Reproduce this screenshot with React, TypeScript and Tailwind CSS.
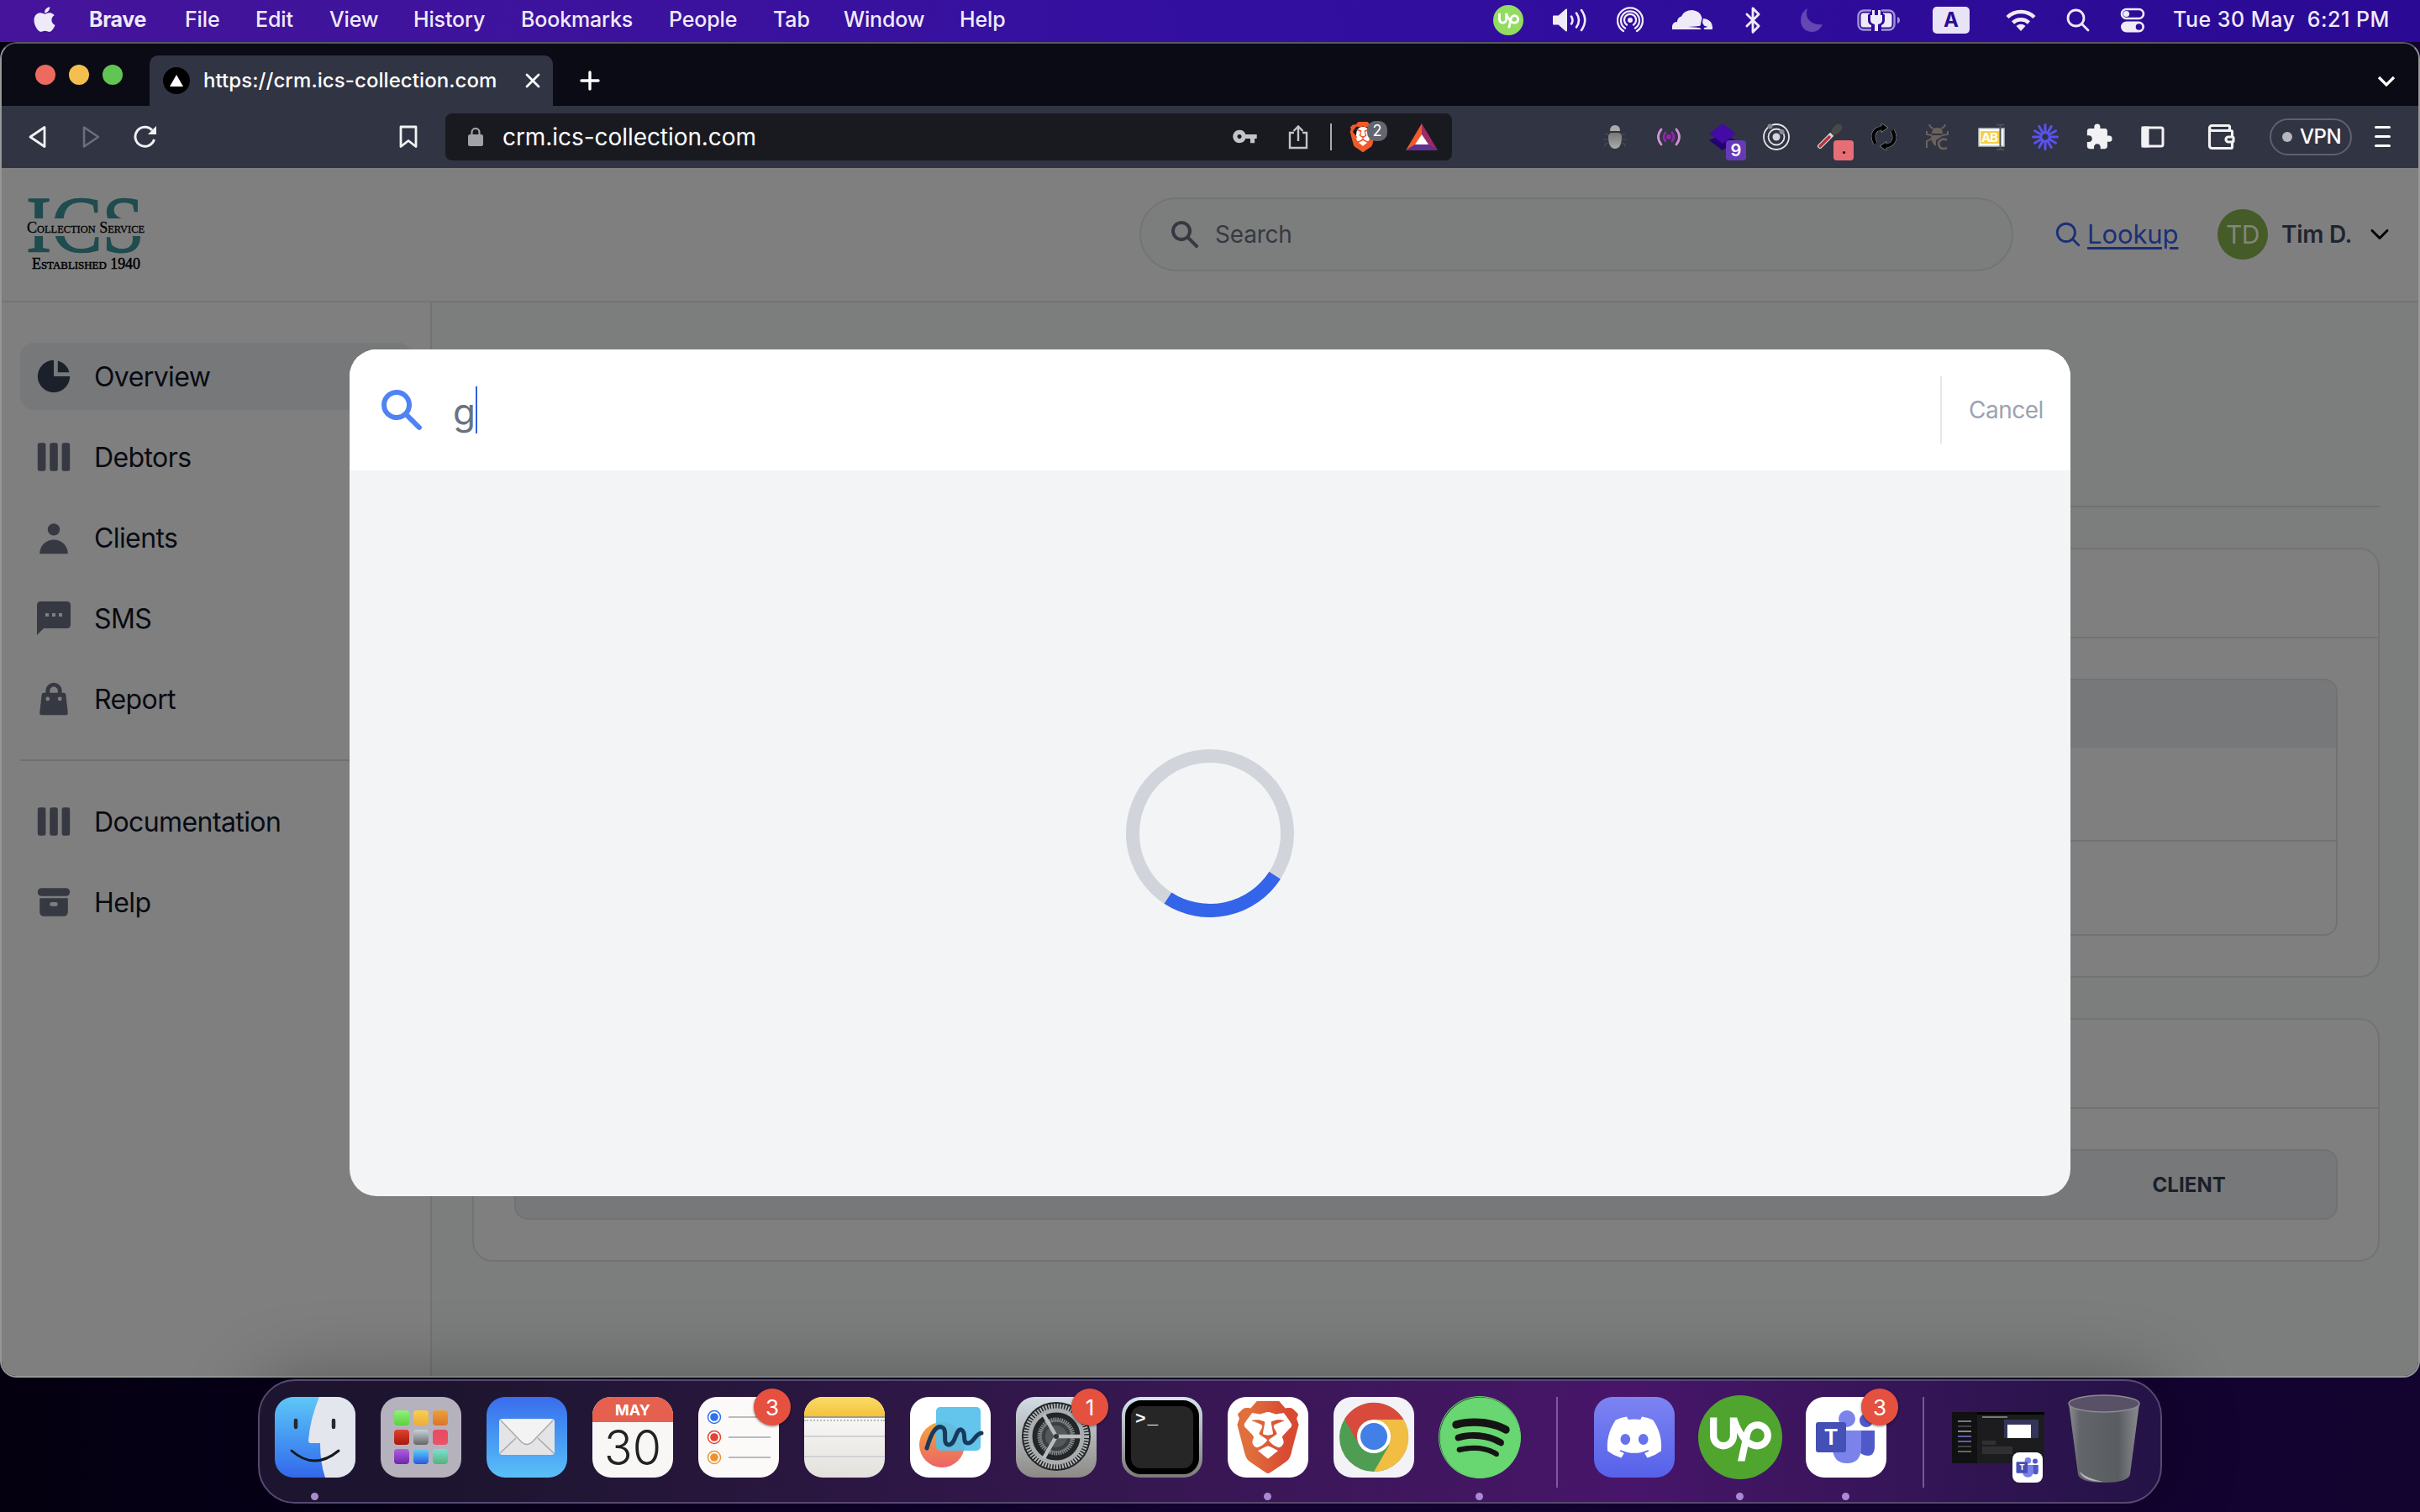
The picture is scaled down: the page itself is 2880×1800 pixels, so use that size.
import React from "react";
import { Bluetooth, ChevronDown, X, Wallet } from "lucide-react";
import { FaApple, FaDiscord, FaSpotify } from "react-icons/fa";
import { SiBrave, SiUpwork } from "react-icons/si";
import { HiArchive, HiChartPie, HiSearch, HiShoppingBag, HiUser, HiViewBoards } from "react-icons/hi";
import { HiOutlineMagnifyingGlass } from "react-icons/hi2";
import { MdExtension, MdSms, MdVpnKey } from "react-icons/md";

const menuItems = [
  { label: "Brave", cls: "w-[114px] font-bold tracking-[-0.4px]" },
  { label: "File", cls: "w-[84px]" },
  { label: "Edit", cls: "w-[88px]" },
  { label: "View", cls: "w-[100px]" },
  { label: "History", cls: "w-[128px]" },
  { label: "Bookmarks", cls: "w-[176px]" },
  { label: "People", cls: "w-[124px]" },
  { label: "Tab", cls: "w-[84px]" },
  { label: "Window", cls: "w-[138px]" },
  { label: "Help", cls: "w-[80px]" },
];

function MenuBar() {
  return (
    <header className="flex h-[50px] shrink-0 items-center bg-linear-to-r from-[#45149a] via-[#330fa0] to-[#2a0a94] text-[25px] font-medium tracking-[-0.15px] text-[#efeaf8]">
      <div className="flex h-full w-[106px] items-center pl-[39px] pb-[4px]">
        <FaApple size={34} className="w-[28px]" />
      </div>
      {menuItems.map((m) => (
        <span key={m.label} className={`shrink-0 whitespace-nowrap pb-[2px] ${m.cls}`}>{m.label}</span>
      ))}
      <div className="ml-auto flex h-full items-center pb-[2px]">
        <span className="mr-[35px] flex size-[36px] items-center justify-center rounded-full bg-[#93dc62] text-white">
          <SiUpwork size={25} />
        </span>
        <svg width="42" height="30" viewBox="0 0 42 30" className="mr-[34px]" fill="none" stroke="currentColor" strokeWidth="2.6" strokeLinecap="round">
          <path d="M1 10.5h6L16 2.5v25L7 19.5H1z" fill="currentColor" strokeWidth="2" strokeLinejoin="round" />
          <path d="M22 10.5q3 4.5 0 9M28 6.500q6 8.500 0 17M34 3q8.500 12 0 24" />
        </svg>
        <svg width="32" height="32" viewBox="0 0 32 32" className="mr-[33px]" fill="none" stroke="currentColor" strokeWidth="2.300" strokeLinecap="round">
          <circle cx="16" cy="16" r="3" fill="currentColor" stroke="none" />
          <path d="M12 21.500a7 7 0 1 1 8 0M10 25.500a11 11 0 1 1 12 0M8 29a15 15 0 1 1 16 0" />
        </svg>
        <svg width="50" height="28" viewBox="0 0 50 28" className="mr-[27px]" fill="currentColor">
          <path d="M1 25v-4q1-5 6-5 0-5 5-6.500Q15 2 25 2q9 1 11 8 1 3 0 6l-1.500 4.500-4.500 1.500 4.500 1.500L35.500 25zM38 12q10 1 11 10v3H39.500l-1-2 4.500-1-4-1.500-2-3.500z" />
          <path d="M36 12l1.500 9 5.500 1-5.500 1-.5 3-1-3-16-1 15-1z" fill="#2d0b9b" />
        </svg>
        <Bluetooth size={34} className="mr-[40px] w-[40px]" strokeWidth={2} />
        <svg width="30" height="30" viewBox="0 0 30 30" className="mr-[37px] -ml-[4px]" fill="#6447b4">
          <path d="M9 1q-3 8 2 14t16 5q-4 9-13 9Q2 28 1 16 1 5 9 1z" />
        </svg>
        <svg width="54" height="28" viewBox="0 0 54 28" className="mr-[37px]" fill="none">
          <path d="M18 2.500H9a6.500 6.500 0 0 0-6.500 6.500v10a6.500 6.500 0 0 0 6.500 6.500h9M30 2.500h9A6.500 6.500 0 0 1 45.500 9v10a6.500 6.500 0 0 1-6.500 6.500h-9" stroke="#a293d4" strokeWidth="2.400" />
          <path d="M49 10v8q3-1 3-4t-3-4z" fill="#a293d4" />
          <path d="M16 5.500H8.500Q5.500 5.500 5.500 9v10q0 3.500 3 3.500H18v-2.500q-4-1.500-4-6V7.500l2-1zM32 5.500h7q3.500 0 3.500 3.500v10q0 3.500-3.500 3.500h-9v-2.500q4-1.500 4-6V7.500l-2-1zM17 8h14v6q0 4-5 5v8h-4v-8q-5-1-5-5zM19 2h3v6h-3zM26 2h3v6h-3z" fill="currentColor" />
        </svg>
        <span className="mr-[43px] flex h-[32px] w-[44px] items-center justify-center rounded-[5px] bg-[#e9e4f5] text-[24px] font-bold text-[#2c0b98]">A</span>
        <svg width="36" height="27" viewBox="0 0 36 27" className="mr-[36px]" fill="none" stroke="currentColor" strokeWidth="4.500">
          <path d="M2 9.500a23 23 0 0 1 32 0M8.500 16a14 14 0 0 1 19 0" />
          <path d="M18 26l-5.500-6a8 8 0 0 1 11 0z" fill="currentColor" stroke="none" />
        </svg>
        <svg width="28" height="28" viewBox="0 0 28 28" className="mr-[36px]" fill="none" stroke="currentColor" strokeWidth="2.800" strokeLinecap="round">
          <circle cx="11.500" cy="11.500" r="9.500" /><path d="M18.500 18.500l7.500 7.500" />
        </svg>
        <svg width="30" height="30" viewBox="0 0 30 30" className="mr-[33px]" fill="none">
          <rect x="2" y="2" width="26" height="11" rx="5.500" stroke="currentColor" strokeWidth="2.600" /><circle cx="7.500" cy="7.500" r="3.600" fill="currentColor" />
          <rect x="1" y="16.500" width="28" height="13" rx="6.500" fill="currentColor" /><circle cx="22.500" cy="23" r="3.800" fill="#2c0b98" />
        </svg>
        <span className="mr-[36px] w-[258px] shrink-0 whitespace-pre tracking-[0.5px]">{"Tue 30 May  6:21 PM"}</span>
      </div>
    </header>
  );
}

function TabStrip() {
  return (
    <div className="flex h-[74px] shrink-0 items-start bg-[#0a0b14]">
      <div className="flex w-[176px] gap-4 pl-[40px] pt-[25px]">
        <i className="size-[24px] rounded-full bg-[#ed6a5e]" />
        <i className="size-[24px] rounded-full bg-[#f4bf4f]" />
        <i className="size-[24px] rounded-full bg-[#61c554]" />
      </div>
      <div className="mt-[14px] flex h-[60px] w-[480px] items-center rounded-t-[10px] bg-[#313442] pl-[16px]">
        <span className="mr-[16px] flex size-[32px] items-center justify-center rounded-full bg-black">
          <svg width="16" height="14" viewBox="0 0 16 14"><path d="M8 0l8 14H0z" fill="#fff" /></svg>
        </span>
        <span className="w-[378px] whitespace-nowrap text-[24px] font-medium tracking-[0.07px] text-white">https://crm.ics-collection.com</span>
        <X size={28} strokeWidth={2.400} className="text-white" />
      </div>
      <svg width="24" height="24" viewBox="0 0 24 24" className="ml-[32px] mt-[32px]" stroke="#fff" strokeWidth="3.400" strokeLinecap="round"><path d="M2 12h20M12 2v20" /></svg>
      <svg width="22" height="14" viewBox="0 0 22 14" className="ml-auto mr-[27px] mt-[38px]" fill="none" stroke="#fff" strokeWidth="3.200"><path d="M2 2l9 9 9-9" /></svg>
    </div>
  );
}

function BraveMark({ size }: { size: number }) {
  return (
    <span className="relative flex items-center justify-center">
      <i className="absolute top-[18%] h-[66%] w-[56%] rounded-[40%] bg-white" />
      <SiBrave size={size} className="relative text-[#f0592a]" />
    </span>
  );
}

function Slot({ children, last }: { children: React.ReactNode; last?: boolean }) {
  return <div className={last ? "relative flex h-[34px] w-[80px] items-center justify-center" : "relative flex h-[34px] w-[64px] items-center justify-center"}>{children}</div>;
}

function Extensions() {
  const rays = Array.from({ length: 12 }, (_, i) => i * 30);
  return (
    <div className="flex items-center">
      <Slot>
        <svg width="28" height="28" viewBox="0 0 28 28">
          <defs><linearGradient id="bug" x1="0" y1="0" x2="0" y2="1"><stop offset="0" stopColor="#777" /><stop offset="1" stopColor="#aaa" /></linearGradient></defs>
          <path d="M8 7q0-7 6-7t6 7z" fill="#a9a9a9" />
          <path d="M6 12l-4-2M6 17H0M6 21l-4 2v3M22 12l4-2M22 17h6M22 21l4 2v3" stroke="#4c4e55" strokeWidth="1.200" fill="none" />
          <path d="M6 13q1-4 4-4h8q3 0 4 4 0 15-8 15T6 13z" fill="url(#bug)" />
        </svg>
      </Slot>
      <Slot>
        <svg width="28" height="22" viewBox="0 0 28 22" fill="none" strokeWidth="2.800" strokeLinecap="round">
          <circle cx="14" cy="11" r="3" fill="#9027ae" /><path d="M10 6q-4 5 0 10M18 6q4 5 0 10" stroke="#8c2aaa" />
          <path d="M5 2q-7 9 0 18M23 2q7 9 0 18" stroke="#cf93dc" />
        </svg>
      </Slot>
      <Slot>
        <svg width="32" height="32" viewBox="0 0 32 32"><path d="M0 20l16-7 16 7-16 12z" fill="#22046e" /><path d="M16 0l16 12-16 12L0 12z" fill="#430aa6" /></svg>
        <span className="absolute left-[36px] top-[21px] flex size-[24px] items-center justify-center rounded-[4px] bg-[#643ab7] text-[20px] font-semibold leading-none text-white">9</span>
      </Slot>
      <Slot>
        <svg width="32" height="32" viewBox="0 0 32 32" fill="none" stroke="#e2e4e8" strokeWidth="1.800">
          <circle cx="16" cy="16" r="15" /><circle cx="16" cy="16" r="9.500" /><circle cx="16" cy="16" r="4.500" fill="#d5d7da" stroke="none" />
          <circle cx="8.500" cy="3.500" r="3" fill="#898b90" stroke="none" /><circle cx="22.500" cy="10" r="3" fill="#898b90" stroke="none" />
        </svg>
      </Slot>
      <Slot>
        <svg width="32" height="32" viewBox="0 0 32 32" strokeLinecap="round" fill="none">
          <path d="M4 27L19 12" stroke="#d4d4d4" strokeWidth="6" /><path d="M4 27L15 16" stroke="#b8323d" strokeWidth="3.500" />
          <path d="M17 8l7 7" stroke="#333" strokeWidth="5" /><path d="M22 9l4-4" stroke="#484848" strokeWidth="9" />
        </svg>
        <span className="absolute left-[36px] top-[21px] flex size-[24px] items-center justify-center rounded-[4px] bg-[#e76d76]"><i className="mt-[6px] size-[3px] rounded-full bg-black" /></span>
      </Slot>
      <Slot>
        <svg width="30" height="32" viewBox="0 0 30 32" fill="none">
          <g stroke="#8e9097" strokeWidth="5"><path d="M5 24Q-1 13 7 7l6-2M25 8q6 11-2 17l-6 2" /></g>
          <path d="M12 -.5l8 5.500-8 5.500zM18 32.500l-8-5.500 8-5.500z" fill="#000" stroke="#8e9097" strokeWidth=".8" />
          <g stroke="#000" strokeWidth="4"><path d="M5 24Q-1 13 7 7l6-2M25 8q6 11-2 17l-6 2" /></g>
        </svg>
      </Slot>
      <Slot>
        <svg width="30" height="32" viewBox="0 0 30 32" fill="none" stroke="#6b6259" strokeWidth="2">
          <path d="M5 1q1 4 5 5M24 1q-1 4-5 5M8 14L2 13V9M20 14l7-1V9M8 18l-6 3v8" /><path d="M8 12q0-7 6.500-7t6.500 7zM7 14h15l-9 6v7q-6-3-6-13z" fill="#6b6259" stroke="none" />
          <path d="M26 20q-3-2-6-1-4 2-4 5 1 6 6 6 2 0 4-1" strokeWidth="2.600" />
        </svg>
      </Slot>
      <Slot>
        <svg width="32" height="32" viewBox="0 0 32 32">
          <rect x="1" y="6" width="30" height="21" fill="#fff" stroke="#b9c4c2" strokeWidth="1.500" /><rect x="3" y="9" width="24" height="15" fill="#f7cf46" />
          <text x="4" y="22" fontSize="15" fontWeight="700" fontFamily="Inter, sans-serif" fill="#fff" textLength="20">AB</text>
          <path d="M22 1.500h9M22 31h9M26.500 1.500V31" stroke="#4c5150" strokeWidth="2" />
        </svg>
      </Slot>
      <Slot>
        <svg width="32" height="32" viewBox="0 0 32 32" stroke="#5a52f0" strokeWidth="3" strokeLinecap="round">
          {rays.map((r) => <path key={r} d="M16 1.500V11" transform={`rotate(${r} 16 16)`} />)}
          <circle cx="16" cy="16" r="5.500" fill="none" strokeWidth="2.500" />
        </svg>
      </Slot>
      <Slot><MdExtension size={34} className="text-[#f2f2f4]" /></Slot>
      <Slot><svg width="28" height="26" viewBox="0 0 28 26" fill="none" stroke="#f2f2f4" strokeWidth="3"><rect x="2" y="2" width="24" height="22" rx="2" /><path d="M2 2h6v22H2z" fill="#f2f2f4" /></svg></Slot>
      <Slot last><Wallet size={36} strokeWidth={2.100} className="ml-[17px] text-[#f2f2f4]" /></Slot>
    </div>
  );
}

function Toolbar() {
  return (
    <div className="flex h-[74px] shrink-0 items-center bg-[#313442] pb-px">
      <svg width="24" height="28" viewBox="0 0 24 28" className="ml-[31px] mr-[41px]" fill="none" stroke="#f2f2f4" strokeWidth="2.800" strokeLinejoin="round"><path d="M20 2.500v23L3 14z" /></svg>
      <svg width="22" height="28" viewBox="0 0 22 28" className="mr-[38px]" fill="none" stroke="#6c6f7a" strokeWidth="2.600" strokeLinejoin="round"><path d="M2 2.500v23L19 14z" /></svg>
      <svg width="30" height="28" viewBox="0 0 30 28" className="mr-[287px]" fill="none" stroke="#f2f2f4" strokeWidth="3"><path d="M25.500 17A11.500 11.500 0 1 1 23 6" /><path d="M28 1v10H18z" fill="#f2f2f4" stroke="none" /></svg>
      <svg width="22" height="28" viewBox="0 0 22 28" className="mr-[33px]" fill="none" stroke="#f2f2f4" strokeWidth="2.800" strokeLinejoin="round"><path d="M2 2h18v23.500l-9-7-9 7z" /></svg>
      <div className="flex h-[56px] w-[1198px] items-center rounded-[8px] bg-[#191a20]">
        <svg width="18" height="22" viewBox="0 0 18 22" className="ml-[27px] mr-[23px]"><rect y="8" width="18" height="14" rx="2.500" fill="#a0a2a6" /><path d="M4.500 9V5.500a4.500 4.500 0 0 1 9 0V9" fill="none" stroke="#a0a2a6" strokeWidth="2.200" /></svg>
        <span className="text-[28px] tracking-[-0.06px] text-white">crm.ics-collection.com</span>
        <MdVpnKey size={31} className="ml-auto mr-[36px] text-[#c3c4c8]" />
        <svg width="24" height="30" viewBox="0 0 24 30" className="mr-[26px]" fill="none" stroke="#c3c4c8" strokeWidth="2.400"><path d="M7 10H2v18h20V10h-5M12 20V2M6.500 8L12 2.500 17.500 8" /></svg>
        <i className="mr-[22px] h-[32px] w-[2px] bg-[#aaabb0]" />
        <div className="relative mr-[28px] w-[38px]">
          <span className="block w-[30px]"><BraveMark size={36} /></span>
          <span className="absolute left-[20px] top-[-1px] flex size-[24px] items-center justify-center rounded-[10px] bg-[#63666f] text-[18px] leading-none text-white">2</span>
        </div>
        <svg width="38" height="32" viewBox="0 0 38 32" className="mr-[17px]"><path d="M19 0L0 32l12-7 7-12z" fill="#f1592b" /><path d="M19 0l19 32-12-7-7-12z" fill="#9c2a66" /><path d="M0 32h38l-11-7H11z" fill="#60308f" /><path d="M19 13l8 12H11z" fill="#fff" /></svg>
      </div>
      <div className="ml-[162px]"><Extensions /></div>
      <div className="ml-[27px] flex h-[44px] w-[98px] items-center rounded-full border-2 border-[#5f626e] pl-[13px] text-[24px] font-medium tracking-[-0.5px] text-white">
        <i className="mr-[9px] size-[12px] shrink-0 rounded-full bg-[#b5b6bf]" />VPN
      </div>
      <div className="ml-[27px] flex w-[19px] flex-col gap-[8px]">
        <i className="h-[3px] w-full rounded-full bg-white" /><i className="h-[3px] w-full rounded-full bg-white" /><i className="h-[3px] w-full rounded-full bg-white" />
      </div>
    </div>
  );
}

function PageHeader() {
  return (
    <div className="flex h-[160px] shrink-0 items-center border-b-2 border-[#737474] bg-[#7f7f7f] text-[28px]">
      <svg width="160" height="100" viewBox="-6 -6 160 100" className="ml-[23px] mt-[2px]" fontFamily="Liberation Serif, serif">
        <text x="0" y="64" fontSize="95" fill="#1f4c4f" stroke="#1f4c4f" strokeWidth="1.500" textLength="141" lengthAdjust="spacingAndGlyphs">ICS</text>
        <rect y="24" x="-2" width="146" height="21" fill="#7f7f7f" />
        <text x="1" y="41" fontSize="19" stroke="#000" strokeWidth="0.300" textLength="140" lengthAdjust="spacingAndGlyphs" style={{ fontVariant: "small-caps" }}>Collection Service</text>
        <text x="7" y="84" fontSize="18" stroke="#000" strokeWidth="0.500" textLength="129" lengthAdjust="spacingAndGlyphs" style={{ fontVariant: "small-caps" }}>Established 1940</text>
      </svg>
      <div className="ml-auto flex h-[88px] w-[1040px] items-center rounded-full border-2 border-[#727573] bg-[#7b7e7c] pl-[32px] text-[#363942]">
        <HiSearch size={40} className="mr-[16px]" />
        <span className="tracking-[-0.2px]">Search</span>
      </div>
      <div className="ml-[48px] flex w-[195px] items-center text-[31px] tracking-[-0.1px] text-[#1b2f78]">
        <HiOutlineMagnifyingGlass size={34} strokeWidth={2} className="mr-[6px]" />
        <span className="underline decoration-[3px] underline-offset-[4px]">Lookup</span>
      </div>
      <span className="flex size-[60px] items-center justify-center rounded-full bg-[#455c28] text-[30px] tracking-[-0.5px] text-[#83857f]">TD</span>
      <span className="ml-[16px] w-[99px] whitespace-nowrap font-semibold tracking-[-0.3px] text-[#1f252e]">Tim D.</span>
      <ChevronDown size={36} strokeWidth={2} className="mr-[28px] text-black" />
    </div>
  );
}

const navTop = [
  { label: "Overview", Icon: HiChartPie },
  { label: "Debtors", Icon: HiViewBoards },
  { label: "Clients", Icon: HiUser },
  { label: "SMS", Icon: MdSms },
  { label: "Report", Icon: HiShoppingBag },
];
const navBottom = [
  { label: "Documentation", Icon: HiViewBoards },
  { label: "Help", Icon: HiArchive },
];

function Sidebar() {
  const item = ({ label, Icon }: { label: string; Icon: React.ComponentType<{ size?: number; className?: string }> }, active = false) => (
    <li key={label} className={active ? "flex h-[80px] items-center gap-[24px] rounded-[16px] bg-[#77787a] pl-[16px] text-[#1b212a]" : "flex h-[80px] items-center gap-[24px] pl-[16px] text-[#363942]"}>
      <Icon size={48} />
      <span className="pt-[2px] text-[#080b12]">{label}</span>
    </li>
  );
  return (
    <nav className="w-[512px] shrink-0 border-r-2 border-[#727473] bg-[#7f7f7f] px-[22px] pt-[48px] text-[32px] tracking-[-0.6px]">
      <ul className="flex flex-col gap-4">{navTop.map((n, i) => item(n, i === 0))}</ul>
      <ul className="mt-[32px] flex flex-col gap-4 border-t-2 border-[#6f7071] pt-[32px]">{navBottom.map((n) => item(n))}</ul>
    </nav>
  );
}

function Content() {
  return (
    <main className="flex-1 bg-[#7b7e7c] pl-[48px] pr-[46px]">
      <div className="h-[244px] border-b-2 border-[#6f7171]" />
      <section className="mt-[48px] h-[512px] rounded-[24px] border-2 border-[#727373] bg-[#7f7f7f]">
        <div className="h-[106px] border-b-2 border-[#727373]" />
        <div className="mx-[48px] mt-[48px] flex h-[306px] flex-col overflow-hidden rounded-[16px] border-2 border-[#717273]">
          <div className="h-[80px] bg-[#77787a]" />
          <div className="h-[112px] border-b-2 border-[#717273]" />
        </div>
      </section>
      <section className="mt-[48px] h-[290px] rounded-[24px] border-2 border-[#727373] bg-[#7f7f7f]">
        <div className="h-[106px] border-b-2 border-[#727373]" />
        <div className="mx-[48px] mt-[48px] flex h-[84px] items-center rounded-[16px] border-2 border-[#717273] bg-[#77787a]">
          <span className="ml-auto mr-[131px] pt-[2px] text-[24px] font-bold tracking-[0.1px] text-[#1a1f29]">CLIENT</span>
        </div>
      </section>
    </main>
  );
}

function SearchModal() {
  return (
    <div className="absolute left-[414px] top-[364px] flex h-[1008px] w-[2048px] flex-col overflow-hidden rounded-[32px] bg-[#f3f4f6]">
      <div className="flex h-[144px] shrink-0 items-center bg-white">
        <HiSearch size={60} className="ml-[32px] text-[#4f83f4]" />
        <span className="ml-[31px] mt-[3px] w-[27px] text-[44px] leading-none text-[#6b7280]">g</span>
        <i className="h-[56px] w-[2px] bg-[#2f5fe0]" />
        <i className="ml-auto h-[80px] w-[2px] bg-[#e5e7eb]" />
        <span className="ml-[32px] w-[121px] text-[28px] tracking-[-0.5px] text-[#9ca3af]">Cancel</span>
      </div>
      <div className="flex flex-1 justify-center pt-[332px]">
        <svg width="200" height="200" viewBox="0 0 200 200" fill="none" strokeWidth="16">
          <circle cx="100" cy="100" r="92" stroke="#d1d5db" />
          <circle cx="100" cy="100" r="92" stroke="#3364ea" pathLength="360" strokeDasharray="90 270" transform="rotate(33 100 100)" />
        </svg>
      </div>
    </div>
  );
}

const Tile = ({ children, cls }: { children: React.ReactNode; cls: string }) => (
  <div className={`size-full overflow-hidden rounded-[22px] ${cls}`}>{children}</div>
);

function DockItem({ children, running, badge }: { children: React.ReactNode; running?: boolean; badge?: string }) {
  return (
    <div className="relative size-[96px] shrink-0">
      {children}
      {badge && <span className="absolute -right-[14px] -top-[10px] flex size-[44px] items-center justify-center rounded-full bg-[#e5503f] text-[26px] text-white shadow-[0_1px_3px_rgba(0,0,0,0.5)]">{badge}</span>}
      {running && <i className="absolute left-[43px] top-[114px] size-[9px] rounded-full bg-[#a88bd0]" />}
    </div>
  );
}

function TeamsLogo() {
  return (
    <svg viewBox="0 0 96 96" className="size-full">
      <circle cx="72" cy="28" r="8" fill="#5059c9" /><path d="M62 40h20v21q-1 9-8 9-8 0-12-7z" fill="#5059c9" />
      <circle cx="49" cy="26" r="10" fill="#7b83eb" /><path d="M32 40h34v22q-1 17-17 17T32 62z" fill="#7b83eb" />
      <rect x="12" y="30" width="36" height="36" rx="3" fill="#4450b5" />
      <text x="30" y="57" textAnchor="middle" fontSize="25" fontWeight="700" fontFamily="Inter, sans-serif" fill="#fff">T</text>
    </svg>
  );
}

const launchpadTiles = [
  ["#92f07c", "#5bd13f"], ["#f6d053", "#eeac37"], ["#eda03b", "#dc7428"],
  ["#e2422f", "#a5180f"], ["#c5d3da", "#666"], ["#ea4a62", "#e85466"],
  ["#b25ce4", "#6c28a8"], ["#5cd4fa", "#2757e0"], ["#7ce0d2", "#55b27a"],
];

function Dock() {
  return (
    <div className="relative mx-auto mt-[2px] flex h-[148px] w-[2266px] shrink-0 rounded-[44px] border-2 border-[#57496f] bg-linear-to-r from-[#1d152f] from-10% via-[#48156a] via-72% to-[#241346] pl-[18px] pt-[19px] shadow-[0_0_90px_rgba(0,0,0,0.3)]">
      <div className="flex gap-[30px]">
        <DockItem running>
          <Tile cls="bg-linear-to-b from-[#5fc6f7] to-[#3567ea]">
            <svg viewBox="0 0 96 96" fill="none">
              <path d="M53 0Q42 26 40 52q0 3 3 3h11q0 24 6 41h36V0z" fill="#e3e6ed" />
              <path d="M25 28v8M70 28v8" stroke="#26282d" strokeWidth="4.500" strokeLinecap="round" />
              <path d="M20 64q27 24 56 0" stroke="#16181d" strokeWidth="3" strokeLinecap="round" />
            </svg>
          </Tile>
        </DockItem>
        <DockItem>
          <Tile cls="bg-[#b5b2bd]">
            <svg viewBox="0 0 96 96">
              {launchpadTiles.map(([a, b], i) => (
                <g key={a}>
                  <linearGradient id={`lp${i}`} x1="0" y1="0" x2="0" y2="1"><stop offset="0" stopColor={a} /><stop offset="1" stopColor={b} /></linearGradient>
                  <rect x={16 + (i % 3) * 23} y={16 + Math.floor(i / 3) * 23} width="18" height="18" rx="4" fill={`url(#lp${i})`} />
                </g>
              ))}
            </svg>
          </Tile>
        </DockItem>
        <DockItem>
          <Tile cls="bg-linear-to-b from-[#3a6cec] to-[#5ac0f7]">
            <svg viewBox="0 0 96 96" fill="none" stroke="#a9a9ab" strokeWidth="1.500">
              <rect x="15" y="26" width="66" height="43" rx="4" fill="#e4e4e6" stroke="none" />
              <path d="M16 28l26 25q6 6 12 0l26-25-2-1H18z" fill="#f3f3f4" stroke="none" />
              <path d="M16 67l19-18M80 67L61 49M17 28l25 26q6 5 12 0l25-26" />
            </svg>
          </Tile>
        </DockItem>
        <DockItem>
          <Tile cls="bg-[#f8f7f6]">
            <div className="flex h-[30px] items-center justify-center bg-[#e5604f] text-[18px] font-bold text-white">MAY</div>
            <svg viewBox="0 0 96 66"><text x="14" y="51" fontSize="58" fontWeight="300" fontFamily="Inter, sans-serif" fill="#222" textLength="68" lengthAdjust="spacingAndGlyphs">30</text></svg>
          </Tile>
        </DockItem>
        <DockItem badge="3">
          <Tile cls="bg-[#fbfaf9]">
            <svg viewBox="0 0 96 96">
              {["#2f73f0", "#e24434", "#e99430"].map((c, i) => (
                <g key={c}>
                  <circle cx="19" cy={24 + i * 24} r="7.500" fill="#fff" stroke={c} strokeWidth="1.500" /><circle cx="19" cy={24 + i * 24} r="4.800" fill={c} />
                  <path d={`M36 ${24 + i * 24}h50`} stroke="#a5a6ab" strokeWidth="1.500" />
                </g>
              ))}
            </svg>
          </Tile>
        </DockItem>
        <DockItem>
          <Tile cls="bg-linear-to-b from-white to-[#e3e1dc]">
            <div className="h-[25px] border-b-2 border-[#a59b80] bg-linear-to-b from-[#fadc66] to-[#f4c238]" />
            <div className="mt-[2px] border-b-2 border-dotted border-[#bbb]" />
            <div className="mt-[17px] h-[26px] border-y-2 border-[#d3d3d6]" />
          </Tile>
        </DockItem>
        <DockItem>
          <Tile cls="bg-white">
            <svg viewBox="0 0 96 96">
              <defs><linearGradient id="ff" x1="0" y1="0" x2="0" y2="1"><stop offset="0" stopColor="#f2a63a" /><stop offset="1" stopColor="#ec6468" /></linearGradient></defs>
              <circle cx="38" cy="57" r="27" fill="url(#ff)" /><rect x="31" y="12" width="53" height="52" rx="5" fill="#56bfea" fillOpacity=".92" />
              <path d="M20 61C26 40 32 34 38 36c8 3-1 20 8 21 9 0 8-20 15-18 7 3 0 16 8 16 7 0 8-11 16-12" fill="none" stroke="#173a5c" strokeWidth="5" strokeLinecap="round" />
            </svg>
          </Tile>
        </DockItem>
        <DockItem badge="1">
          <Tile cls="bg-linear-to-b from-[#d3dee6] to-[#8d8a86]">
            <svg viewBox="0 0 96 96" fill="none">
              <circle cx="48" cy="47" r="41" fill="#232526" />
              <circle cx="48" cy="47" r="36" stroke="#b4b8ba" strokeWidth="6" strokeDasharray="1.900 1.500" />
              <circle cx="48" cy="47" r="31" stroke="#a9adaf" strokeWidth="5" />
              <circle cx="48" cy="47" r="20" fill="#55585a" stroke="#85898b" strokeWidth="5" strokeDasharray="1.500 1" />
              <circle cx="48" cy="47" r="15" stroke="#3c3e40" strokeWidth="4" />
              <path d="M48 47h29M48 47L33 21M48 47L33 73" stroke="#b8bcbe" strokeWidth="4.500" /><circle cx="48" cy="47" r="3" fill="#333" />
            </svg>
          </Tile>
        </DockItem>
        <DockItem>
          <Tile cls="bg-linear-to-b from-[#d5e6ef] to-[#7d7a78] p-[4px]">
            <div className="size-full rounded-[19px] border-[7px] border-black bg-[#262626] pl-[5px] pt-[2px] font-['Liberation_Mono'] text-[21px] font-bold leading-[27px] tracking-[2px] text-white">{">_"}</div>
          </Tile>
        </DockItem>
        <DockItem running>
          <Tile cls="flex items-center justify-center bg-white">
            <svg width="0" height="0"><linearGradient id="brave"><stop offset="0.200" stopColor="#e06f3c" /><stop offset="0.800" stopColor="#d94a32" /></linearGradient></svg>
            <SiBrave size={86} fill="url(#brave)" />
          </Tile>
        </DockItem>
        <DockItem>
          <Tile cls="bg-[#f3f2f6]">
            <svg viewBox="0 0 96 96">
              <circle cx="48" cy="48" r="41" fill="#4f9d52" />
              <path d="M48 27h35.500a41 41 0 0 1-35.500 62l18-31z" fill="#f1bd42" />
              <path d="M13 26.500a41 41 0 0 1 70.500 0.500H48q-14 1-19 15l2 16z" fill="#d84b3c" />
              <circle cx="48" cy="47" r="20" fill="#fff" /><circle cx="48" cy="47" r="16" fill="#4280e8" />
            </svg>
          </Tile>
        </DockItem>
        <DockItem running>
          <div className="flex size-[96px] items-center justify-center rounded-full bg-[#141414] ring-1 ring-[#68d671]"><FaSpotify size={99} className="shrink-0 text-[#68d671]" /></div>
        </DockItem>
      </div>
      <i className="ml-[43px] h-[108px] w-[2px] bg-[#8156a5]" />
      <div className="ml-[43px] flex gap-[30px]">
        <DockItem><Tile cls="flex items-center justify-center bg-linear-to-b from-[#7d83f1] to-[#5661ea]"><FaDiscord size={70} className="text-white" /></Tile></DockItem>
        <DockItem running><div className="-m-[2px] flex size-[100px] items-center justify-center rounded-full bg-[#4fa52e] pt-[4px] text-white"><SiUpwork size={73} /></div></DockItem>
        <DockItem running badge="3"><Tile cls="bg-white"><TeamsLogo /></Tile></DockItem>
      </div>
      <i className="ml-[43px] h-[108px] w-[2px] bg-[#7a559b]" />
      <div className="relative ml-[33px] mt-[18px] flex h-[61px] w-[110px] bg-[#1c1c1e]">
        <div className="flex w-[30px] flex-col gap-[4px] bg-[#111113] pl-[7px] pt-[10px]">
          {["bg-[#777]", "bg-[#444]", "bg-[#888]", "bg-[#5b5fa8]", "bg-[#5b5fa8]", "bg-[#444]", "bg-[#665]"].map((c, i) => <i key={i} className={`h-[2px] w-[16px] ${c}`} />)}
        </div>
        <div className="flex-1 border-t-[3px] border-black pl-[6px] pt-[2px]">
          <div className="h-[2px] w-[30px] bg-[#777]" />
          <div className="ml-[26px] mt-[2px] h-[22px] w-[41px] bg-[#34355a] pl-[4px] pt-[6px]"><div className="h-[16px] w-[28px] bg-white" /></div>
          <div className="mt-[3px] h-[5px] w-[16px] bg-[#303032]" /><div className="mt-[2px] h-[9px] w-[36px] bg-[#303032]" />
        </div>
        <div className="absolute left-[72px] top-[48px] size-[36px] overflow-hidden rounded-[8px] bg-white"><TeamsLogo /></div>
      </div>
      <svg width="86" height="106" viewBox="0 0 86 106" className="-mt-[3px] ml-[28px]">
        <defs><linearGradient id="bin"><stop offset="0" stopColor="#8a8c90" /><stop offset=".15" stopColor="#62666a" /><stop offset=".7" stopColor="#595c60" /><stop offset="1" stopColor="#898b8f" /></linearGradient></defs>
        <path d="M1 11l11 84q2 10 31 10t31-10L85 11z" fill="url(#bin)" /><path d="M14 92q4 12 28 12-20-4-28-12z" fill="#b4b6b8" />
        <ellipse cx="43" cy="11" rx="42" ry="10" fill="#595267" stroke="#8b8b92" strokeWidth="1.500" />
      </svg>
    </div>
  );
}

export default function App() {
  return (
    <div className="flex h-[1800px] w-[2880px] flex-col overflow-hidden bg-linear-to-r from-[#04000f] via-[#160438] to-[#12032f] font-['Inter',sans-serif] [&_svg]:shrink-0">
      <MenuBar />
      <div className="relative flex h-[1590px] shrink-0 flex-col overflow-hidden rounded-[20px] border-2 border-x-[#969796] border-b-[#969896] border-t-[#57585f]">
        <TabStrip />
        <Toolbar />
        <PageHeader />
        <div className="flex flex-1">
          <Sidebar />
          <Content />
        </div>
        <SearchModal />
      </div>
      <Dock />
    </div>
  );
}
